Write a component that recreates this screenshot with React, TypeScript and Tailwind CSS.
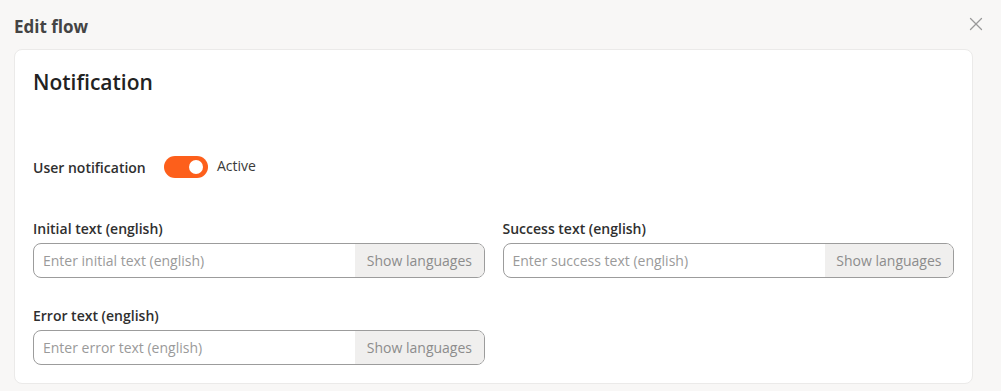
import { X } from 'lucide-react'

const LangField = ({ label, placeholder }: { label: string; placeholder: string }) => {
  return (
    <div className="flex flex-col">
      <label className="text-[14px] font-semibold text-[#2f2f2f] leading-[20px] mb-[4px]">{label}</label>
      <div className="flex h-[35px] rounded-[8px] border border-[#9c9c9c] overflow-hidden bg-white">
        <input
          className="flex-1 min-w-0 px-[9px] text-[14px] text-[#333] placeholder:text-[#9a9a9a] outline-none bg-transparent"
          placeholder={placeholder}
        />
        <button className="px-[11.5px] bg-[#f0efee] text-[14px] text-[#8c8c8c] whitespace-nowrap">
          Show languages
        </button>
      </div>
    </div>
  )
}

export default function App() {
  return (
    <div className="w-[1001px] h-[391px] bg-[#f8f7f6] font-['Open_Sans',sans-serif] px-[14px] pt-[13px] pb-[8px]">
      {/* Header */}
      <div className="flex items-center justify-between h-[26px] mb-[10px]">
        <h2 className="text-[17px] font-bold text-[#444] leading-none">Edit flow</h2>
        <button className="text-[#9a9a9a] -mt-[4px]">
          <X className="w-[22px] h-[22px]" strokeWidth={1.4} />
        </button>
      </div>

      {/* Card */}
      <div className="w-[959px] bg-white border border-[#ebeae9] rounded-[8px] px-[18px] pt-[18px] pb-[18px]">
        <h3 className="text-[21px] font-semibold text-[#222] leading-[28px]">Notification</h3>

        <div className="flex items-center mt-[60px] h-[22px]">
          <span className="text-[14px] font-semibold text-[#2f2f2f] w-[131px]">User notification</span>
          <div className="relative w-[44px] h-[22px] rounded-full bg-[#fd5f1b]">
            <span className="absolute right-[5px] top-[4px] w-[14px] h-[14px] rounded-full bg-white" />
          </div>
          <span className="ml-[9px] text-[14px] text-[#3a3a3a] -mt-[3px]">Active</span>
        </div>

        <div className="grid grid-cols-2 gap-x-[18px] gap-y-[28px] mt-[41px]">
          <LangField label="Initial text (english)" placeholder="Enter initial text (english)" />
          <LangField label="Success text (english)" placeholder="Enter success text (english)" />
          <LangField label="Error text (english)" placeholder="Enter error text (english)" />
        </div>
      </div>
    </div>
  )
}
